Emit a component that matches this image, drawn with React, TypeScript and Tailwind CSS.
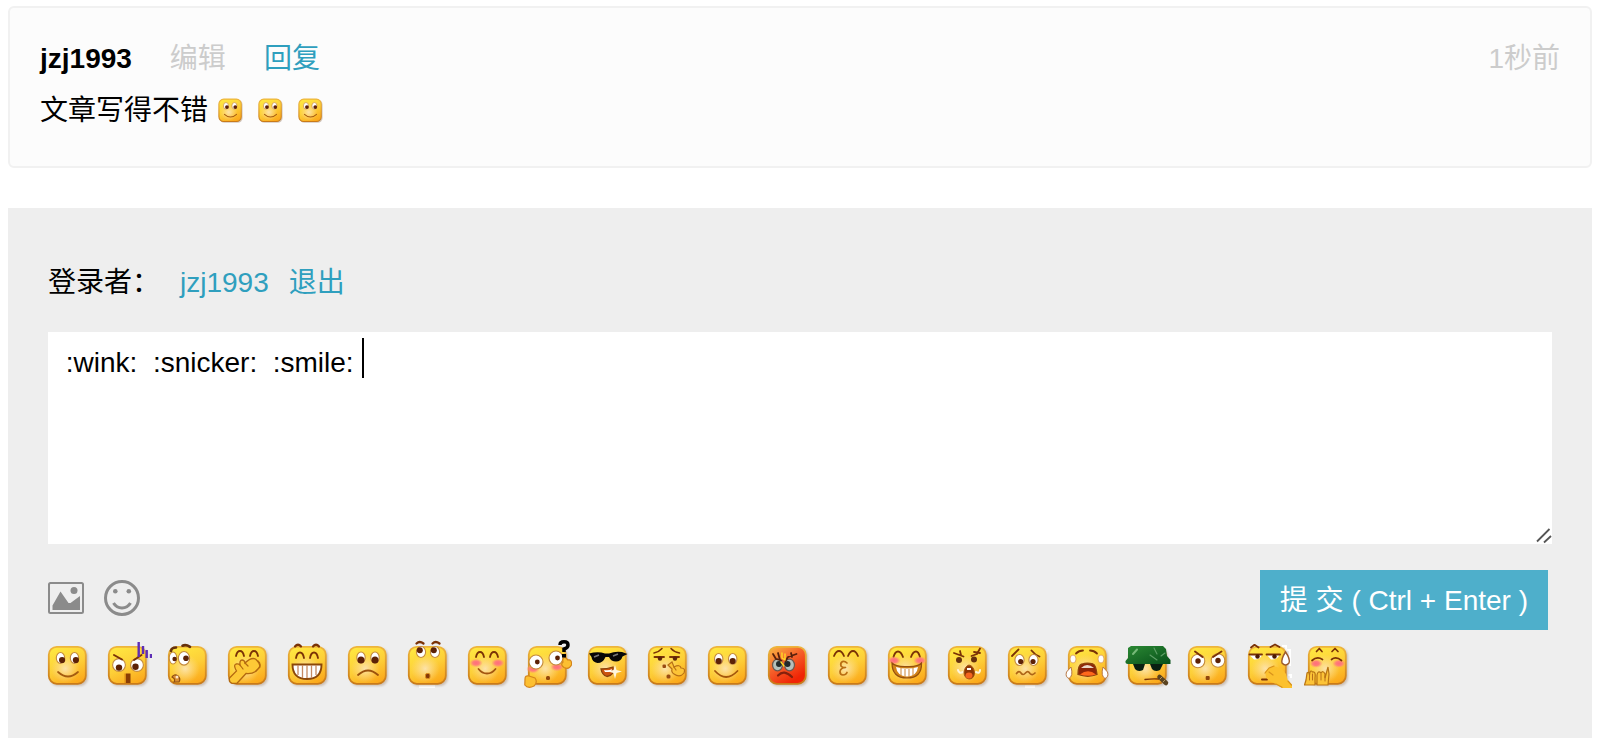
import type { ReactNode } from "react";

const BROWN = "#7a3206";
const EDGE = "#b8701a";

function SharedGradients() {
  return (
    <svg width="0" height="0" className="absolute" aria-hidden="true">
      <defs>
        <linearGradient id="skin" x1="0.3" y1="0" x2="0.75" y2="1">
          <stop offset="0" stopColor="#ffe640" />
          <stop offset="0.5" stopColor="#fdcf38" />
          <stop offset="1" stopColor="#fba71a" />
        </linearGradient>
        <linearGradient id="rage" x1="0.1" y1="0" x2="0.7" y2="0.9">
          <stop offset="0" stopColor="#f9b040" />
          <stop offset="0.5" stopColor="#f5602a" />
          <stop offset="1" stopColor="#f02405" />
        </linearGradient>
        <linearGradient id="rim" x1="0" y1="0" x2="0" y2="1">
          <stop offset="0" stopColor="#eeb53c" />
          <stop offset="1" stopColor="#c97a18" />
        </linearGradient>
        <radialGradient id="glow" cx="0.45" cy="0.6" r="0.4">
          <stop offset="0" stopColor="#fde4b0" stopOpacity="0.95" />
          <stop offset="1" stopColor="#fddc90" stopOpacity="0" />
        </radialGradient>
        <radialGradient id="blush">
          <stop offset="0" stopColor="#ff6d7c" />
          <stop offset="0.5" stopColor="#ff7f78" />
          <stop offset="1" stopColor="#ff9a70" stopOpacity="0.1" />
        </radialGradient>
        <linearGradient id="helmet" x1="0" y1="0" x2="1" y2="1">
          <stop offset="0" stopColor="#2c8a34" />
          <stop offset="1" stopColor="#07501a" />
        </linearGradient>
        <filter id="soft" x="-20%" y="-20%" width="140%" height="140%">
          <feGaussianBlur stdDeviation="1" />
        </filter>
      </defs>
    </svg>
  );
}

function Face({ skin = "url(#skin)", glow = true }: { skin?: string; glow?: boolean }) {
  return (
    <>
      <rect x="6" y="8" width="38" height="38" rx="8" fill="#8a6a50" opacity="0.35" filter="url(#soft)" />
      <rect x="4.8" y="6.8" width="37" height="37" rx="8" fill={skin} stroke="url(#rim)" strokeWidth="1.8" />
      {glow && <rect x="5" y="7" width="36" height="36" rx="7" fill="url(#glow)" />}
    </>
  );
}

type EyeProps = { x: number; y: number; rx?: number; ry?: number; px?: number; py?: number; r?: number; ink?: string };

function Eye({ x, y, rx = 4.2, ry = 5.5, px = 0, py = 2, r = 3.1, ink = "#5c2106" }: EyeProps) {
  return (
    <>
      <ellipse cx={x} cy={y} rx={rx} ry={ry} fill="#fff" stroke="#c48a3c" strokeWidth="1.1" />
      <ellipse cx={x + px} cy={y + py} rx={r} ry={r} fill={ink} />
    </>
  );
}

function Line({ d, w = 1.8, c = BROWN }: { d: string; w?: number; c?: string }) {
  return <path d={d} fill="none" stroke={c} strokeWidth={w} strokeLinecap="round" strokeLinejoin="round" />;
}

function Blush({ x, y }: { x: number; y: number }) {
  return <ellipse cx={x} cy={y} rx="6.5" ry="4.2" fill="url(#blush)" />;
}

const faces: { name: string; art: ReactNode }[] = [
  {
    name: "smile",
    art: (
      <>
        <Face />
        <Eye x={16.5} y={18} px={1.6} py={2} />
        <Eye x={30.5} y={18} px={1.4} py={2} />
        <Line d="M14 32Q24 41 34 32" w={1.7} c="#a55c10" />
      </>
    ),
  },
  {
    name: "despise",
    art: (
      <>
        <Face glow={false} />
        <Eye x={15} y={25} rx={6.4} ry={6.4} py={2.6} r={3.2} />
        <Eye x={33} y={25} rx={6.4} ry={6.4} px={-1.5} py={1.8} r={3.2} />
        <Line d="M10 15L18 19.5M37.5 15L30 20" w={2} />
        <rect x="22" y="33.5" width="4.5" height="9.5" fill="#8a3d04" />
        <rect x="20.5" y="33.5" width="1.5" height="9.5" fill="#dc8d15" />
        <path d="M34.7 2V17M39 6V14M42.7 10V18M47 14V18" stroke="#5d2db5" strokeWidth="2.4" fill="none" />
      </>
    ),
  },
  {
    name: "peek",
    art: (
      <>
        <Face />
        <Eye x={9} y={18} rx={3.8} ry={6} px={1.6} py={1} r={2.2} />
        <Eye x={20} y={18.3} rx={5.6} ry={6.8} px={2} py={0} r={2.8} />
        <Line d="M7 11Q7.5 7.5 12 7.5M18.5 5.7Q22 4.2 26 6.8" w={2.6} c="#65300b" />
        <path d="M8 37Q10 33.5 14 36Q17 39 15 42H10Q12 39 8 37Z" fill="#d98d32" stroke="#8d4c12" strokeWidth="1.2" />
        <circle cx="13" cy="37" r="1.5" fill="#ffe7c5" />
      </>
    ),
  },
  {
    name: "snicker",
    art: (
      <>
        <Face />
        <Line d="M12 16Q13 11 16 11Q19 11 20 16M26 16Q27 11 30 11Q33 11 34 16" />
        <path
          d="M5.5 38L12.5 31Q9 25 12 24Q14.5 23.5 16 25Q15.5 20 18 20Q20.5 20 21 23Q27 17 31.5 19Q36 23 36 27L31.5 31.5Q28 34 22 33.5L13 43.3H8Q4.5 42 5.5 38Z"
          fill="#fdc936"
          stroke="#b3690f"
          strokeWidth="1.3"
        />
        <Line d="M16 25L19 29M21 23L24 26M34 21Q39 25 32 31" w={1.2} c="#b3690f" />
      </>
    ),
  },
  {
    name: "grin",
    art: (
      <>
        <Face />
        <Line d="M11 6.5Q14 3 17 6.5M29 6.5Q32 3 35 6.5" w={2.3} />
        <Line d="M12 18Q13 12.5 16 12.5Q19 12.5 20 18M26 18Q27 12.5 30 12.5Q33 12.5 34 18" />
        <path d="M8.5 24.5H37.5Q37.5 39 23 39Q8.5 39 8.5 24.5Z" fill="#fff" stroke="#8b4708" strokeWidth="1.9" />
        <path d="M14 25V35M18.5 25V38M23 25V38M27.5 25V38M32 25V35" stroke="#c58a63" strokeWidth="1.3" />
      </>
    ),
  },
  {
    name: "sad",
    art: (
      <>
        <Face />
        <Eye x={17} y={17.5} py={2.5} r={3.5} />
        <Eye x={31} y={17.5} py={2.5} r={3.5} />
        <Line d="M14 35Q24 26 34 35" c="#9c520c" />
      </>
    ),
  },
  {
    name: "wonder",
    art: (
      <>
        <rect x="15" y="45" width="16" height="3" fill="#fff" />
        <Face />
        <Line d="M12.5 3.5Q15.5 0.500 19.5 3.5M28.5 3.5Q31.5 0.500 35.5 3.5" w={2.2} />
        <Eye x={17} y={12} rx={4.6} px={-1.2} py={-1.8} r={3} />
        <Eye x={31} y={12} rx={4.6} px={-1.2} py={-1.8} r={3} />
        <rect x="21.5" y="33.5" width="4.5" height="5" rx="1.5" fill="#853807" stroke="#d98c1d" strokeWidth="1" />
      </>
    ),
  },
  {
    name: "shy",
    art: (
      <>
        <Face />
        <Line d="M12 17Q13 12 16 12Q19 12 20 17M26 17Q27 12 30 12Q33 12 34 17" />
        <Blush x={12} y={23} />
        <Blush x={34} y={23} />
        <Line d="M14.5 29Q18 33.5 23 33.5Q28 33.5 31.5 29" c="#a35610" />
      </>
    ),
  },
  {
    name: "question",
    art: (
      <>
        <Face />
        <Blush x={9} y={29} />
        <Blush x={33} y={27} />
        <Eye x={12} y={22} rx={7} ry={7} px={1.3} py={0} r={2.4} />
        <Eye x={32} y={18} rx={7} ry={7} px={1.5} py={0} r={2.4} />
        <path d="M39 22Q38 18 41 17L44 20Q48 19 47.5 25Q45 30 40 27.5Q36 25 39 22Z" fill="#fcbf31" stroke="#d4851d" strokeWidth="1.2" />
        <path d="M1 39Q1 35 5 36L11 38Q14 42 10 46Q4 49 0.8 45Z" fill="#fcbf31" stroke="#d4851d" strokeWidth="1.2" />
        <path d="M36 5Q36 1.8 40 1.8Q44 1.8 44 5Q44 8 40 9V12" fill="none" stroke="#000" strokeWidth="3.5" />
        <rect x="38" y="14" width="4" height="3.5" fill="#000" />
        <rect x="22" y="36" width="4" height="4" rx="1.5" fill="#94470b" />
      </>
    ),
  },
  {
    name: "cool",
    art: (
      <>
        <Face />
        <path d="M5 13.5Q14 11 21 13.5H25Q31 11 38 12L43.5 14L38.5 16.5Q37 21.5 32 21.5Q27 21.5 25 17H21.5Q19 23 13.5 23Q8 22 7.5 17Z" fill="#070707" />
        <path d="M10 17L15 15M29 16L34 14" stroke="#777" strokeWidth="1.6" />
        <path d="M17 29Q23 29 29 27Q31 35 23 36.5Q18 35 17 29Z" fill="#cc5310" stroke="#89410a" strokeWidth="1.3" />
        <path d="M20 30Q25 31 28 29L27 32H21Z" fill="#fff" />
        <path d="M31 25L32.5 30L38 31.5L32.5 33L31 39L29.5 33L24 31.5L29.5 30Z" fill="#fff6df" />
      </>
    ),
  },
  {
    name: "think",
    art: (
      <>
        <Face />
        <Line d="M10 13Q15 12 18 8.5M27 8.5Q30 12 35.5 13" w={1.5} />
        <Line d="M10.5 17H20M26 17H35" w={1.9} />
        <circle cx="16" cy="18.5" r="2.2" fill="#5d2508" />
        <circle cx="31" cy="18.5" r="2.2" fill="#5d2508" />
        <rect x="18.5" y="24.5" width="3.5" height="3.5" rx="1" fill="#994c12" />
        <rect x="22.5" y="34.5" width="4" height="4" rx="1.5" fill="#994c12" />
        <path d="M24 25L28 22L30 27Q36 24 37 28Q42 28 40 33Q36 38 30 34Q27 32 28 29Z" fill="#fdc437" stroke="#b87015" strokeWidth="1.2" />
        <Line d="M30 27L32 30" w={1.2} c="#b87015" />
      </>
    ),
  },
  {
    name: "happy",
    art: (
      <>
        <Face />
        <Eye x={14.7} y={19} py={2} r={3.1} />
        <Eye x={28.7} y={19} py={2} r={3.1} />
        <Line d="M11 31Q22 43 33.5 31" c="#a5570c" />
      </>
    ),
  },
  {
    name: "angry",
    art: (
      <>
        <Face skin="url(#rage)" glow={false} />
        <ellipse cx="13.5" cy="25" rx="5" ry="5.8" fill="#b4c0bc" stroke="#6d5950" strokeWidth="1.3" />
        <ellipse cx="25.5" cy="25" rx="5" ry="5.8" fill="#b4c0bc" stroke="#6d5950" strokeWidth="1.3" />
        <circle cx="15" cy="24" r="3" fill="#222a2c" />
        <circle cx="23.5" cy="24" r="3" fill="#222a2c" />
        <Line d="M9 14L12 19L17.5 20.5M14 13L16 20M32.5 14L24 17L21.5 21M27 13L28 17" w={1.8} c="#57200c" />
        <Line d="M18 13V18L21 20V14M17 22L20 26" w={1.4} c="#ffdb24" />
        <Line d="M14 35.5Q20 29 28 37" w={2.2} c="#85200c" />
      </>
    ),
  },
  {
    name: "kiss",
    art: (
      <>
        <Face />
        <Line d="M10 16Q12 11 15 11Q18 11 20 16M24 16Q26 11 29 11Q32 11 34 16" />
        <Line d="M23 23Q21 21 18.500 21.500Q16 23 17 26Q18.500 28 21.500 27.500Q16.500 28 16 31.500Q16 35 19 35Q22 35 23 32.500" w={1.7} c="#b96d12" />
      </>
    ),
  },
  {
    name: "laugh",
    art: (
      <>
        <Face />
        <Line d="M9.5 17Q11 11.5 14 11.5Q17 11.5 19 17M27 17Q29 11.5 32 11.5Q34.5 11.5 36 17" />
        <Blush x={10} y={20.5} />
        <Blush x={36} y={20.5} />
        <path d="M8 23Q12 27 23 26.5Q34 27 37.5 23Q38 38 23 38Q8 38 8 23Z" fill="#d38419" stroke="#95500d" strokeWidth="1.2" />
        <path d="M12 27Q23 30 34 27Q33 36 23 36.5Q13 36 12 27Z" fill="#fff" />
        <path d="M17 28V35M21 29V37M25 29V37M29 28V35" stroke="#d69a57" strokeWidth="1.2" />
      </>
    ),
  },
  {
    name: "shout",
    art: (
      <>
        <Face />
        <Line d="M10 13L19.5 16.5M16 11L17 15M36 8.5L33 14L27.5 16M30 12L36 13" w={1.8} />
        <circle cx="15" cy="20" r="3" fill="#65310d" />
        <circle cx="30" cy="19.5" r="3" fill="#65310d" />
        <Line d="M14 30Q15 34 19 32M32 32Q36 34 36 30" w={2} c="#fff6dc" />
        <path d="M20 32Q21 26 25 25Q30 26 30.5 33Q30 39 25 39Q20 38 20 32Z" fill="#8d3605" stroke="#a85a0d" strokeWidth="1" />
        <ellipse cx="25" cy="35.5" rx="3.5" ry="3" fill="#f4651e" />
        <path d="M23 28H27V30H23Z" fill="#fff" />
      </>
    ),
  },
  {
    name: "nervous",
    art: (
      <>
        <path d="M21 46.5H31M42.500 10V30" stroke="#fff" strokeWidth="2.5" />
        <Face />
        <Line d="M8 16L14.5 9.5M27.5 10.5Q31 15 35.5 16.5" w={1.8} />
        <Eye x={15.5} y={20} rx={4.6} px={1.2} py={1.5} r={2.6} />
        <Eye x={29.5} y={20} rx={4.6} px={-0.5} py={1.5} r={2.6} />
        <Line d="M12.5 33.5Q15 30 17 33Q19 36 21.5 33Q24 30 26 33.5Q28 36 31 33" w={1.7} c="#ad6416" />
      </>
    ),
  },
  {
    name: "cry",
    art: (
      <>
        <Face />
        <Line d="M12 13.5Q15 10.5 19 10.5M26 10.5Q30 10.5 33 13.5" w={1.8} />
        <ellipse cx="9" cy="19" rx="3" ry="4" fill="#fff" stroke="#d99b55" strokeWidth="0.8" />
        <ellipse cx="37" cy="19" rx="3" ry="4" fill="#fff" stroke="#d99b55" strokeWidth="0.8" />
        <path d="M7 27Q9.5 36 5 38.5Q1 37 2.5 32Z" fill="#fff" stroke="#b87845" strokeWidth="1" />
        <path d="M39 27Q36.5 36 41 38.5Q45 37 43.5 32Z" fill="#fff" stroke="#b87845" strokeWidth="1" />
        <path d="M14 34.5Q14 25 18 24Q23 22.500 29 24Q32 25 33 34.5Q24 38 14 34.5Z" fill="#8e2508" stroke="#8c420b" strokeWidth="1.3" />
        <path d="M17 28Q23 22 30 28Z" fill="#ead8c8" />
        <path d="M16 34.5Q24 28 32 34.5Q24 37 16 34.5Z" fill="#ff681c" />
      </>
    ),
  },
  {
    name: "soldier",
    art: (
      <>
        <Face />
        <path d="M9 24H21L19 30Q14 32.5 11 29ZM26 24H39L36 30Q31 32.5 28 29Z" fill="#092012" />
        <path d="M1.500 21L4 18V8L7 6H39L42 9L43 16L46.500 20V24H4Q1 24 1.500 21Z" fill="url(#helmet)" />
        <Line d="M9 14L13 9.500" w={2} c="#76b978" />
        <Line d="M26 15L33 20M30 8L33 14M37 16L41 13" w={1.1} c="#5f9f67" />
        <Line d="M21 39.500Q28 38.500 35 39" w={1.4} />
        <Line d="M35.500 37L42 43" w={4.5} c="#5a4320" />
        <Line d="M36 39L38 37M39 42L41 40" w={1} c="#b4955b" />
      </>
    ),
  },
  {
    name: "glare",
    art: (
      <>
        <Face />
        <Eye x={14} y={21} rx={6.8} ry={6.8} py={0} r={2.7} />
        <Eye x={34} y={20.5} rx={6.8} ry={6.8} py={0} r={2.7} />
        <Line d="M11 11.5L18.5 17M37.5 11.5L29 17" w={1.9} />
        <rect x="21.7" y="36" width="4" height="4" rx="1" fill="#91460c" />
      </>
    ),
  },
  {
    name: "wink",
    art: (
      <>
        <path d="M38 6H42V10H46V26M44 35H47V38" fill="none" stroke="#fff" strokeWidth="2" />
        <Face />
        <Line d="M7 7.500L10.5 4.8L14.5 7.500M26.5 7L31 4.5L35.500 7" w={1.8} />
        <path d="M5.5 15H18Q16 20 10 19.5ZM23 15H35.5Q33 20 27 19.5Z" fill="#fff" />
        <Line d="M5.5 14.5H18M22.5 14.5H36" w={1.8} />
        <circle cx="13.5" cy="16.5" r="2.2" fill="#4b1b04" />
        <circle cx="30.5" cy="16.5" r="2.2" fill="#4b1b04" />
        <path d="M41.5 12Q46.5 19 45 23Q41.5 27 38 23Q37 19 41.5 12Z" fill="#fff" stroke="#9c5b2b" strokeWidth="1.4" />
        <Line d="M18 39.5H23" w={2} />
        <path d="M21 32L25 28L30 26L38 29L42 34L44 41L48 45V48H38L32 44L25 41L22 37Z" fill="#fcc12e" />
        <Line d="M21 33L25 28L30 26M29 35L25 32M32 44L38 47.3M44 41L47.5 45" w={1.2} c="#d8921b" />
      </>
    ),
  },
  {
    name: "pray",
    art: (
      <>
        <Face />
        <Line d="M12.5 11.5L15.3 8.5L18 11.5M28 11.5L31 8.5L34 11.5" w={1.7} />
        <Blush x={12} y={23.5} />
        <Blush x={35} y={23.5} />
        <Line d="M8 20.5Q13 16 18.5 19.5M27.5 19.5Q32 16 37.5 20.5" w={1.7} />
        <path
          d="M0.5 45L2 40L3 33Q5 31 5.5 35Q6 29 8.5 32Q12 31 11 38V45H0.5ZM13 45V35Q14 30 17 33Q19 30 21 34V38L24 27L25 34L24 45Z"
          fill="#fcc337"
          stroke="#b97514"
          strokeWidth="1.2"
        />
        <Line d="M5.5 35V40M8.5 34V40M17 34V40M21 36V41" w={1} c={EDGE} />
      </>
    ),
  },
];

function ImageIcon() {
  return (
    <svg viewBox="0 0 36 32" className="h-8 w-9" aria-hidden="true">
      <rect x="1" y="1" width="34" height="30" rx="1.5" fill="none" stroke="#8b8b8b" strokeWidth="2" />
      <path d="M4.5 28V23.500L12.5 9.5L20.500 21H22.500L32 14V28Z" fill="#8b8b8b" />
      <circle cx="26" cy="8.5" r="3.5" fill="#8b8b8b" />
    </svg>
  );
}

function SmileyIcon() {
  return (
    <svg viewBox="0 0 36 36" className="size-9" aria-hidden="true">
      <circle cx="18" cy="18" r="16.5" fill="none" stroke="#8b8b8b" strokeWidth="3" />
      <circle cx="11.3" cy="11.3" r="2.3" fill="#8b8b8b" />
      <circle cx="24.8" cy="11.3" r="2.3" fill="#8b8b8b" />
      <path d="M9.5 23Q12.5 28 18 28Q23.5 28 26.5 23" fill="none" stroke="#8b8b8b" strokeWidth="3" />
    </svg>
  );
}

function Comment() {
  return (
    <article className="rounded-md border-2 border-[#f1f1f1] bg-[#fcfcfc] px-[30px] pt-[25px] pb-[29px] leading-[52px]">
      <header className="flex gap-[38px]">
        <strong className="font-bold">jzj1993</strong>
        <a href="#edit" className="text-[#cccccc]">编辑</a>
        <a href="#reply" className="text-[#2f9fbe]">回复</a>
        <time className="ml-auto text-[#cccccc]">1秒前</time>
      </header>
      <div className="flex items-center">
        <p>文章写得不错</p>
        <div className="ml-2 flex gap-[11px] pb-1">
          {[0, 1, 2].map((n) => (
            <svg key={n} viewBox="0 0 48 48" className="size-[29px]" role="img" aria-label="smile">
              {faces[0].art}
            </svg>
          ))}
        </div>
      </div>
    </article>
  );
}

export default function App() {
  return (
    <main className="flex min-h-screen flex-col gap-10 bg-white pt-1.5 pr-1.5 pl-2 font-['Liberation_Sans','Noto_Sans_CJK_SC',sans-serif] text-[28px] text-black">
      <SharedGradients />
      <Comment />
      <form className="grow bg-[#eeeeee] px-10 pt-[55px] pb-[50px]" onSubmit={(e) => e.preventDefault()}>
        <div className="flex gap-5 leading-10">
          <label htmlFor="comment">登录者：</label>
          <a href="#user" className="text-[#2f9fbe]">jzj1993</a>
          <a href="#logout" className="text-[#2f9fbe]">退出</a>
        </div>
        <div className="relative mt-[29px]">
          <textarea
            id="comment"
            className="block h-[212px] w-full resize-none bg-white px-2.5 pt-[11px] pb-2.5 leading-10 outline-none"
            defaultValue=" :wink:  :snicker:  :smile: "
          />
          <span className="pointer-events-none absolute top-1.5 left-[314px] h-10 w-0.5 bg-black" />
          <svg viewBox="0 0 16 16" className="pointer-events-none absolute right-0 bottom-0 size-4" aria-hidden="true">
            <path d="M1 13.5L13.5 1M8 14.500L15 8" stroke="#555" strokeWidth="1.8" />
          </svg>
        </div>
        <div className="mt-[26px] flex items-center pr-1">
          <div className="flex items-center gap-5 pb-1">
            <button type="button" aria-label="图片">
              <ImageIcon />
            </button>
            <button type="button" aria-label="表情">
              <SmileyIcon />
            </button>
          </div>
          <button type="submit" className="ml-auto h-[60px] bg-[#4eafcb] px-5 pt-0.5 text-white">
            提 交 ( Ctrl + Enter )
          </button>
        </div>
        <div className="mt-2.5 -ml-1 flex flex-wrap gap-3">
          {faces.map((f) => (
            <button key={f.name} type="button" aria-label={f.name} className="size-12">
              <svg viewBox="0 0 48 48" className="block size-12" aria-hidden="true">
                {f.art}
              </svg>
            </button>
          ))}
        </div>
      </form>
    </main>
  );
}
